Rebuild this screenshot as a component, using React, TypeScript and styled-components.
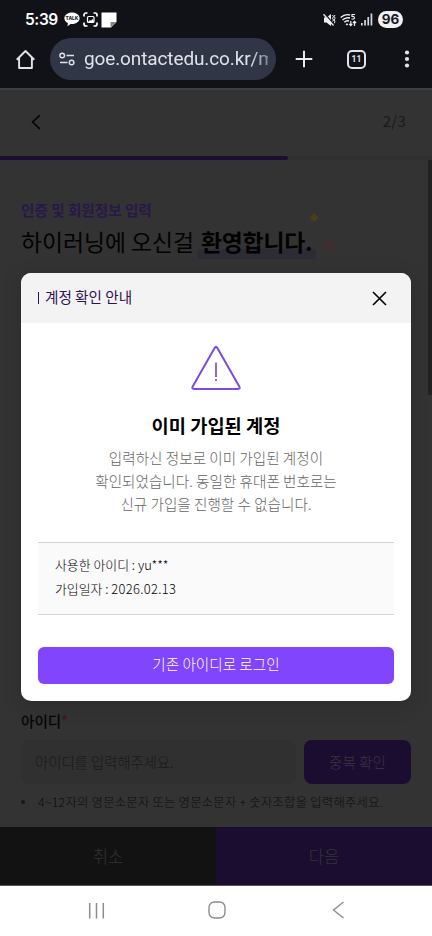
import React from 'react';
import styled, { createGlobalStyle } from 'styled-components';

const GlobalStyle = createGlobalStyle`
  *, *::before, *::after { box-sizing: border-box; }
  body { margin: 0; background: #fff; }
  p, h1, h2, ul { margin: 0; padding: 0; }
  button { border: 0; padding: 0; background: none; font: inherit; color: inherit; display: block; }
  svg { display: block; flex: none; }
`;

const Phone = styled.div`
  width: 432px;
  height: 936px;
  overflow: hidden;
  display: flex;
  flex-direction: column;
  font-family: 'Noto Sans CJK KR', 'Noto Sans', sans-serif;
  font-size: 14.6px;
  white-space: nowrap;
`;

const StatusBar = styled.div`
  height: 38px;
  padding: 1px 29px 0 25px;
  background: #111217;
  color: #fff;
  display: flex;
  align-items: center;
`;

const StatusIcons = styled.div<{ $gap: number }>`
  display: flex;
  align-items: center;
  gap: ${(p) => p.$gap}px;
`;

const Clock = styled.span`
  width: 39px;
  font: 600 15.5px/20px Inter, sans-serif;
  letter-spacing: -0.4px;
`;

const Battery = styled.span`
  width: 25px;
  height: 17px;
  margin-left: 5px;
  border-radius: 9px;
  background: #f1f1f3;
  color: #17181d;
  text-align: center;
  font: 700 13.5px/17px Inter, sans-serif;
`;

const Spacer = styled.div`
  flex: 1;
`;

const BrowserBar = styled.div`
  height: 50px;
  padding: 0 22px 8px 15px;
  background: #111217;
  display: flex;
  align-items: center;
`;

const AddressPill = styled.div`
  width: 226px;
  height: 42px;
  margin-left: 14px;
  margin-right: 19px;
  padding: 0 8px 0 9px;
  border-radius: 21px;
  background: #313646;
  display: flex;
  align-items: center;
  gap: 9px;
`;

const Url = styled.span`
  flex: 1;
  overflow: hidden;
  color: #e0e2ec;
  font: 400 19px/26px Roboto, sans-serif;
  letter-spacing: -0.12px;
  mask-image: linear-gradient(90deg, #000 90%, rgba(0, 0, 0, 0.45));
`;

const TabCount = styled.div`
  width: 19px;
  height: 19px;
  margin-left: 34px;
  margin-right: 38px;
  border: 2px solid #e3e4ea;
  border-radius: 5px;
  color: #e3e4ea;
  text-align: center;
  font: 700 8.5px/15px Roboto, sans-serif;
`;

const Viewport = styled.main`
  position: relative;
  height: 798px;
  border-top: 2px solid #3e3f43;
  border-bottom: 1px solid #555;
  background: #333;
  display: flex;
  flex-direction: column;
`;

const StepHeader = styled.header`
  height: 66px;
  padding: 0 26px 2px 30px;
  display: flex;
  align-items: center;
  justify-content: space-between;
  color: #1a1a1a;
`;

const StepCount = styled.span`
  height: 22px;
  margin-top: -3px;
  line-height: 22px;
  font-size: 14.8px;
  letter-spacing: 0.3px;
`;

const ProgressTrack = styled.div`
  height: 4px;
  background: #303030;
`;

const ProgressFill = styled.div`
  width: 66.667%;
  height: 4px;
  border-radius: 0 2px 2px 0;
  background: #1b0e31;
`;

const Form = styled.section`
  height: 667px;
  padding: 39px 21px 0;
  display: flex;
  flex-direction: column;
`;

const Eyebrow = styled.p`
  height: 23px;
  color: #28184a;
  font-weight: 700;
  line-height: 22px;
`;

const Welcome = styled.h1`
  height: 40px;
  display: flex;
  align-items: center;
  color: #020202;
  font-size: 22.8px;
  font-weight: 400;
  line-height: 40px;
`;

const Highlight = styled.strong`
  position: relative;
  margin-left: 3px;
  padding: 0 4px;
  font-weight: 700;
  letter-spacing: -0.15px;
  line-height: 32px;

  &::before {
    content: '';
    position: absolute;
    z-index: 0;
    left: 0;
    right: 0;
    bottom: -1px;
    height: 10px;
    border-radius: 4px;
    background: #2c2b36;
  }
`;

const HighlightText = styled.span`
  position: relative;
`;

const Sparkle = styled.svg`
  position: absolute;
  left: 111px;
  top: -20px;
`;

const FieldLabel = styled.label`
  margin-top: 448px;
  height: 22px;
  color: #050505;
  font-weight: 500;
  line-height: 22px;
`;

const Required = styled.span`
  color: #4a1616;
`;

const FieldRow = styled.div`
  margin-top: 8px;
  display: flex;
  gap: 8px;
`;

const InputBox = styled.div`
  flex: 1;
  height: 44px;
  padding-left: 14px;
  border-radius: 8px;
  background: #303030;
  color: #191919;
  font-size: 14.5px;
  font-weight: 300;
  letter-spacing: -0.15px;
  line-height: 43px;
`;

const CheckButton = styled.button`
  width: 107px;
  height: 44px;
  border-radius: 8px;
  background: #1a0d30;
  color: #3b3444;
  font-weight: 300;
  line-height: 42px;
  text-align: center;
`;

const Hint = styled.p`
  margin-top: 8px;
  height: 20px;
  display: flex;
  align-items: center;
  gap: 13px;
  color: #0c0c0c;
  font-size: 12.3px;
  font-weight: 300;
  letter-spacing: 0.27px;
  line-height: 20px;

  &::before {
    content: '';
    width: 4px;
    height: 4px;
    border-radius: 50%;
    background: #171717;
  }
`;

const Actions = styled.div`
  display: grid;
  grid-template-columns: 1fr 1fr;
  height: 58px;
`;

const Action = styled.button<{ $primary?: boolean }>`
  background: ${(p) => (p.$primary ? '#1a0d30' : '#121212')};
  color: #363338;
  font-size: 16.6px;
  font-weight: 300;
  line-height: 24px;
`;

const ScrollThumb = styled.div`
  position: absolute;
  right: 0;
  top: 70px;
  width: 4px;
  height: 235px;
  background: #222;
`;

const DialogLayer = styled.div`
  position: absolute;
  inset: 0;
  padding: 183px 21px 0;
`;

const Dialog = styled.div`
  height: 428px;
  border-radius: 10px;
  overflow: hidden;
  background: #fff;
  box-shadow: 0 4px 20px rgba(0, 0, 0, 0.18);
`;

const DialogHeader = styled.div`
  height: 50px;
  padding: 0 24px 0 17px;
  background: #f3f3f3;
  display: flex;
  align-items: center;
  justify-content: space-between;
`;

const DialogTitle = styled.h2`
  display: flex;
  align-items: center;
  gap: 6px;
  margin-top: -2px;
  color: #311156;
  font-size: 14.6px;
  font-weight: 400;
  line-height: 22px;

  &::before {
    content: '';
    width: 1px;
    height: 12px;
    margin-top: 2px;
    background: #311156;
  }
`;

const DialogBody = styled.div`
  height: 378px;
  padding: 23px 17px 0;
  display: flex;
  flex-direction: column;
  align-items: center;
`;

const Headline = styled.p`
  margin-top: 19px;
  color: #000;
  font-size: 18.7px;
  font-weight: 700;
  line-height: 30px;
`;

const Message = styled.p`
  margin-top: 5.5px;
  color: #666;
  font-weight: 300;
  line-height: 23.3px;
  text-align: center;
`;

const AccountInfo = styled.div`
  width: 100%;
  height: 73px;
  margin-top: 26.6px;
  padding: 10.5px 17px 0;
  border-top: 1px solid #d4d4d4;
  border-bottom: 1px solid #d4d4d4;
  background: #fafafa;
  color: #000;
  font-size: 12.9px;
  font-weight: 300;
  line-height: 23.3px;
`;

const JoinDate = styled.span`
  letter-spacing: 0.33px;
`;

const LoginButton = styled.button`
  width: 100%;
  height: 37.5px;
  margin-top: 32px;
  padding-bottom: 3px;
  border-radius: 6px;
  background: #8045fc;
  color: #fff;
  font-weight: 300;
  line-height: 22px;
`;

const NavBar = styled.nav`
  height: 50px;
  padding: 0 87px 2px 88px;
  background: #fff;
  display: flex;
  align-items: center;
`;

const NavHome = styled.svg`
  margin-left: 103px;
  margin-right: 106px;
`;

const TalkIcon = () => (
  <svg width="16" height="15" viewBox="0 0 16 15">
    <path d="M8 .5C3.7.5.4 3 .4 6.3c0 2.2 1.4 4 3.6 5l-.6 3 3.2-2.3 1.4.1c4.3 0 7.6-2.6 7.6-5.8S12.300.5 8 .5Z" fill="#fff" />
    <text x="8" y="8.2" textAnchor="middle" fontFamily="Inter, sans-serif" fontWeight="800" fontSize="4.8" fill="#17181d">TALK</text>
  </svg>
);

const CaptureIcon = () => (
  <svg width="15" height="15" viewBox="0 0 15 15" fill="none" stroke="#fff" strokeWidth="1.7">
    <path d="M1 4.500V3a2 2 0 0 1 2-2h1.500M10.500 1H12a2 2 0 0 1 2 2v1.500M14 10.500V12a2 2 0 0 1-2 2h-1.500M4.500 14H3a2 2 0 0 1-2-2v-1.500" />
    <rect x="4.500" y="4.500" width="6.500" height="6" rx="1" strokeWidth="1.200" />
    <path d="M5 10l2-2 1 .8L9.500 7l1.300 2v1Z" fill="#fff" stroke="none" />
  </svg>
);

const NoteIcon = () => (
  <svg width="16" height="16" viewBox="0 0 16 16">
    <path d="M.5.5h15V10l-5.500 5.500H.5Z" fill="#fff" />
    <path d="M9.500 15.500V10h6Z" fill="#85868a" />
  </svg>
);

const MuteIcon = () => (
  <svg width="13" height="14" viewBox="0 0 13 14" fill="none" stroke="#f0f0f2">
    <path d="M1 4.500h2.500L8 1v12L3.500 9.500H1Z" fill="#f0f0f2" stroke="none" />
    <path d="M1.800.5l9.500 11.500" stroke="#111217" strokeWidth="1.200" />
    <path d="M.5 1.200l10 11.300" strokeWidth="1.300" />
    <path d="M9.500 2l1 1.500-1 1.800 1 1.700-1 1.500M12 2l-.8 1.500.8 1.800-.8 1.700.8 1.800-.8 1.500" strokeWidth="1" />
  </svg>
);

const WifiIcon = () => (
  <svg width="17" height="14" viewBox="0 0 17 14" fill="none" stroke="#f0f0f2" strokeWidth="1.400">
    <path d="M.7 4.500Q5 .5 10 2M2.500 7Q6 3.800 10 5M4.300 9.300Q6.500 7.300 9 8" />
    <path d="M5.500 11.200l1.500-1 1.200 1L7 12.500Z" fill="#f0f0f2" stroke="none" />
    <path d="M15 1.500h-3v2h1.500a1.300 1.300 0 0 1 0 2.500H11.500" strokeWidth="1.200" />
    <path d="M10.800 8v4.500m-1.700-1.600 1.700 1.700 1.500-1.700M14.500 13V8.300m-1.600 1.700 1.600-1.700 1.600 1.700" strokeWidth="1.200" />
  </svg>
);

const SignalIcon = () => (
  <svg width="12" height="13" viewBox="0 0 12 13" fill="#d7d8dc">
    <rect x="0" y="10" width="1.700" height="2.500" />
    <rect x="3.200" y="7" width="1.700" height="5.500" />
    <rect x="6.400" y="4" width="1.700" height="8.500" />
    <rect x="9.600" y=".5" width="1.700" height="12" />
  </svg>
);

const HomeIcon = () => (
  <svg width="21" height="21" viewBox="0 0 21 21" fill="none" stroke="#e3e4ea" strokeWidth="1.900" strokeLinejoin="round">
    <path d="M1.700 10.700 10.500 2l8.800 8.700M4.100 9v10h12.800V9" />
  </svg>
);

const TuneIcon = () => (
  <svg width="16" height="14" viewBox="0 0 16 14" fill="none" stroke="#dfe1eb" strokeWidth="1.400">
    <circle cx="3.200" cy="3.500" r="2.300" />
    <path d="M7.500 3.500H15M1 10.500h7.500" />
    <circle cx="12.600" cy="10.500" r="2.300" />
  </svg>
);

const PlusIcon = () => (
  <svg width="18" height="18" viewBox="0 0 18 18" stroke="#e8e9ee" strokeWidth="2">
    <path d="M9 .7v16.600M.7 9h16.600" />
  </svg>
);

const MoreIcon = () => (
  <svg width="6" height="18" viewBox="0 0 6 18" fill="#e3e4ea">
    <circle cx="3" cy="2.500" r="2.100" />
    <circle cx="3" cy="9" r="2.100" />
    <circle cx="3" cy="15.500" r="2.100" />
  </svg>
);

export default function App() {
  return (
    <>
      <GlobalStyle />
      <Phone>
        <StatusBar>
          <Clock>5:39</Clock>
          <StatusIcons $gap={3}>
            <TalkIcon />
            <CaptureIcon />
            <NoteIcon />
          </StatusIcons>
          <Spacer />
          <StatusIcons $gap={4}>
            <MuteIcon />
            <WifiIcon />
            <SignalIcon />
          </StatusIcons>
          <Battery>96</Battery>
        </StatusBar>
        <BrowserBar>
          <HomeIcon />
          <AddressPill>
            <TuneIcon />
            <Url>goe.ontactedu.co.kr/m</Url>
          </AddressPill>
          <PlusIcon />
          <TabCount>11</TabCount>
          <MoreIcon />
        </BrowserBar>

        <Viewport>
          <StepHeader>
            <svg width="12" height="16" viewBox="0 0 12 16" fill="none" stroke="#050505" strokeWidth="1.700">
              <path d="M9.700 1.300 2.700 8l7 6.800" />
            </svg>
            <StepCount>2/3</StepCount>
          </StepHeader>
          <ProgressTrack>
            <ProgressFill />
          </ProgressTrack>
          <Form>
            <Eyebrow>인증 및 회원정보 입력</Eyebrow>
            <Welcome>
              하이러닝에 오신걸
              <Highlight>
                <HighlightText>환영합니다.</HighlightText>
                <Sparkle width="40" height="50" viewBox="0 0 40 50" fill="none">
                  <path d="M6.300 7 10.500 11.500 6.300 16 1.500 11.500Z" fill="#4a3e18" />
                  <path d="M15 32l13 14M29 33.500 15 44" stroke="#4c292c" strokeWidth="1.500" />
                </Sparkle>
              </Highlight>
            </Welcome>
            <FieldLabel>
              아이디<Required>*</Required>
            </FieldLabel>
            <FieldRow>
              <InputBox>아이디를 입력해주세요.</InputBox>
              <CheckButton>중복 확인</CheckButton>
            </FieldRow>
            <Hint>4~12자의 영문소문자 또는 영문소문자 + 숫자조합을 입력해주세요.</Hint>
          </Form>
          <Actions>
            <Action>취소</Action>
            <Action $primary>다음</Action>
          </Actions>
          <ScrollThumb />

          <DialogLayer>
            <Dialog role="dialog">
              <DialogHeader>
                <DialogTitle>계정 확인 안내</DialogTitle>
                <svg width="15" height="15" viewBox="0 0 15 15" stroke="#000" strokeWidth="1.600">
                  <path d="M1 1l13 13M14 1 1 14" />
                </svg>
              </DialogHeader>
              <DialogBody>
                <svg width="50" height="45" viewBox="0 0 50 45" fill="none" stroke="#7c4be0" strokeWidth="2">
                  <path d="M23.600 1.900 1.700 40.500q-1.200 2.500 1.300 2.500h44q2.500 0 1.300-2.500L26.400 1.900q-1.400-2-2.800 0Z" strokeLinejoin="round" />
                  <path d="M25 16.500v14.500M25 33v2" strokeWidth="1.700" />
                </svg>
                <Headline>이미 가입된 계정</Headline>
                <Message>
                  입력하신 정보로 이미 가입된 계정이
                  <br />
                  확인되었습니다. 동일한 휴대폰 번호로는
                  <br />
                  신규 가입을 진행할 수 없습니다.
                </Message>
                <AccountInfo>
                  <p>사용한 아이디 : yu***</p>
                  <p>
                    가입일자 : <JoinDate>2026.02.13</JoinDate>
                  </p>
                </AccountInfo>
                <LoginButton>기존 아이디로 로그인</LoginButton>
              </DialogBody>
            </Dialog>
          </DialogLayer>
        </Viewport>

        <NavBar>
          <svg width="17" height="17" viewBox="0 0 17 17" stroke="#8c8c8c" strokeWidth="1.500">
            <path d="M1.700 1v15.500M8.500 1v15.500M15.300 1v15.500" />
          </svg>
          <NavHome width="18" height="18" viewBox="0 0 18 18" fill="none" stroke="#8c8c8c" strokeWidth="1.400">
            <rect x="1" y="1" width="16" height="16" rx="5.500" />
          </NavHome>
          <svg width="13" height="18" viewBox="0 0 13 18" fill="none" stroke="#8c8c8c" strokeWidth="1.400">
            <path d="M11.500 1 1.500 9l10 8" />
          </svg>
        </NavBar>
      </Phone>
    </>
  );
}
